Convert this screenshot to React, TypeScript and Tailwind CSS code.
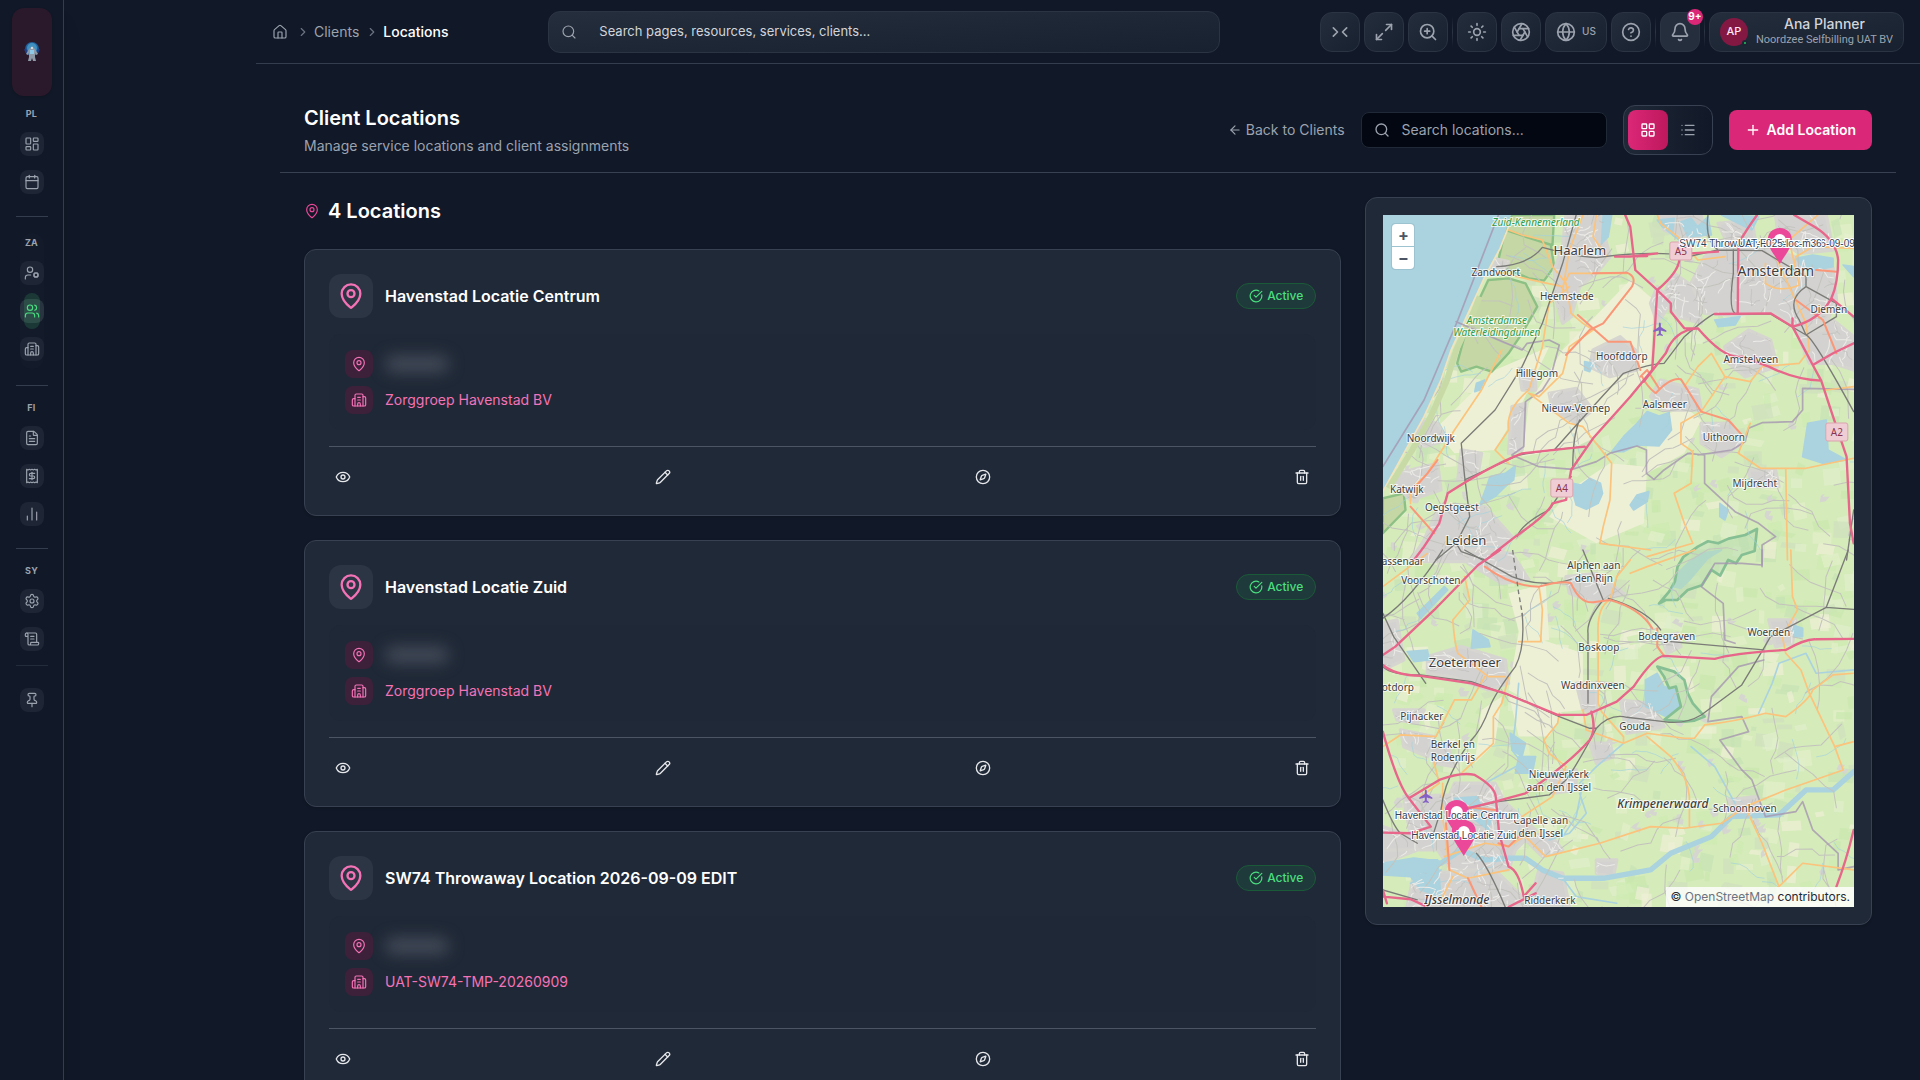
import React from "react";
import {
  Aperture, ArrowLeft, Bell, Building2, Calendar, ChartNoAxesColumn, ChevronRight, ChevronsRightLeft,
  CircleCheckBig, CircleQuestionMark, Compass, Eye, FileText, Globe, House, LayoutDashboard, LayoutGrid,
  List, MapPin, Maximize2, Pencil, Pin, Plus, Receipt, ScrollText, Search, Settings, Sun, Trash2,
  UserCog, Users, ZoomIn,
} from "lucide-react";

type Icon = React.ComponentType<{ className?: string; strokeWidth?: number }>;

/* ---------- Sidebar ---------- */

function NavItem({ icon: I, label, active }: { icon: Icon; label: string; active?: boolean }) {
  return (
    <a
      href="#"
      aria-label={label}
      className={
        active
          ? "relative flex size-6 items-center justify-center rounded-lg bg-[#28343f] text-[#4ade80]"
          : "flex size-6 items-center justify-center rounded-lg bg-[#1e2635] text-[#9ca3af]"
      }
    >
      {active && <span className="absolute -inset-y-1.5 inset-x-1 rounded-full bg-[#4ade80]/15" />}
      <I className="size-4" strokeWidth={1.75} />
    </a>
  );
}

function NavGroup({ title, items }: { title: string; items: { icon: Icon; label: string; active?: boolean }[] }) {
  return (
    <div className="flex flex-col items-center">
      <span className="mb-2.5 text-[9px] leading-4 font-bold tracking-wide text-[#9ca3af]">{title}</span>
      <div className="flex flex-col gap-3.5">
        {items.map((i) => (
          <NavItem key={i.label} {...i} />
        ))}
      </div>
    </div>
  );
}

const Rule = () => <div className="h-px w-8 bg-[#333d4d]" />;

function Logo() {
  return (
    <svg viewBox="0 0 16 20" className="h-5 w-4">
      <circle cx="8" cy="7" r="7" fill="#1f5f9a" />
      <circle cx="8" cy="6" r="5" fill="#3f8fc0" />
      <path d="M1 7l2 4M15 7l-2 4" stroke="#1d3f8a" strokeWidth="2" />
      <path d="M5 7l3-3 3 3 3 5-2 1-1-2v4l1 4H9l-1-3-1 3H4l1-4v-4l-1 2-2-1z" fill="#8f9aa8" />
      <path d="M6 8h4v4H6z" fill="#8fc9e8" />
      <path d="M7 5h2v2H7z" fill="#cdd6dd" />
    </svg>
  );
}

function Sidebar() {
  return (
    <aside className="flex w-16 shrink-0 flex-col items-center border-r border-[#333d4d] bg-[#111827] pt-2 shadow-xl">
      <a href="#" aria-label="Home page" className="flex h-22 w-10 items-center justify-center rounded-xl bg-[#2a192b] shadow">
        <Logo />
      </a>
      <nav className="flex flex-col items-center">
        <div className="pt-2.5 pb-[22px]">
          <NavGroup title="PL" items={[{ icon: LayoutDashboard, label: "Dashboard" }, { icon: Calendar, label: "Calendar" }]} />
        </div>
        <Rule />
        <div className="mt-4 mb-4 rounded-xl bg-[#131b2a] pt-0.5 pb-2">
          <NavGroup
            title="ZA"
            items={[
              { icon: UserCog, label: "Resources" },
              { icon: Users, label: "Clients", active: true },
              { icon: Building2, label: "Organisations" },
            ]}
          />
        </div>
        <Rule />
        <div className="pt-3.5 pb-[22px]">
          <NavGroup
            title="FI"
            items={[
              { icon: FileText, label: "Documents" },
              { icon: Receipt, label: "Invoices" },
              { icon: ChartNoAxesColumn, label: "Reports" },
            ]}
          />
        </div>
        <Rule />
        <div className="pt-3.5 pb-3.5">
          <NavGroup title="SY" items={[{ icon: Settings, label: "Settings" }, { icon: ScrollText, label: "Logs" }]} />
        </div>
        <div className="h-px w-8 bg-[#232c3b]" />
        <button type="button" aria-label="Pin sidebar" className="mt-[22px] flex size-6 items-center justify-center rounded-lg bg-[#1e2635] text-[#9ca3af]">
          <Pin className="size-4" strokeWidth={1.75} />
        </button>
      </nav>
    </aside>
  );
}

/* ---------- Top bar ---------- */

function BarButton({ icon: I, label }: { icon: Icon; label: string }) {
  return (
    <button
      type="button"
      aria-label={label}
      className="flex h-10 min-w-10 items-center justify-center rounded-xl border border-[#2b3443] bg-linear-to-br from-[#242d3b] to-[#18212f] text-[#9ca3af]"
    >
      <I className="size-5" strokeWidth={2} />
    </button>
  );
}

const BarRule = () => <div className="h-8 w-px bg-linear-to-b from-transparent via-[#2b3443] to-transparent" />;

function TopBar() {
  return (
    <header className="flex h-16 items-center justify-between gap-4 border-b border-[#333d4d] px-4">
      <nav aria-label="Breadcrumb" className="flex shrink-0 items-center text-sm text-[#9ca3af]">
        <a href="#" aria-label="Home"><House className="size-4" strokeWidth={1.75} /></a>
        <ChevronRight className="mr-1 ml-2 size-3.5 text-[#6b7280]" />
        <a href="#">Clients</a>
        <ChevronRight className="mr-1 ml-1.5 size-3.5 text-[#6b7280]" />
        <span className="font-medium text-white">Locations</span>
      </nav>
      <label className="flex h-[42px] w-full max-w-2xl items-center rounded-xl border border-[#2b3443] bg-linear-to-br from-[#252e3c] via-[#1e2735] to-[#172130] pl-3">
        <Search className="size-4 shrink-0 text-[#9ca3af]" strokeWidth={1.75} />
        <input
          type="search"
          aria-label="Search pages"
          placeholder="Search pages, resources, services, clients..."
          className="ml-[22px] min-w-0 flex-1 bg-transparent text-[13px] text-white outline-none placeholder:text-[#d1d5db]"
        />
      </label>
      <div className="flex shrink-0 items-center gap-1">
        <BarButton icon={ChevronsRightLeft} label="Compact view" />
        <BarButton icon={Maximize2} label="Full screen" />
        <BarButton icon={ZoomIn} label="Zoom in" />
        <BarRule />
        <BarButton icon={Sun} label="Theme" />
        <BarButton icon={Aperture} label="Accent" />
        <button
          type="button"
          aria-label="Language"
          className="flex h-10 items-center justify-center gap-1.5 rounded-xl border border-[#2b3443] bg-linear-to-br from-[#242d3b] to-[#18212f] px-2.5 text-[#9ca3af]"
        >
          <Globe className="size-5" />
          <span className="text-[10px] font-medium">US</span>
        </button>
        <BarButton icon={CircleQuestionMark} label="Help" />
        <BarRule />
        <button type="button" aria-label="Notifications" className="relative flex size-10 items-center justify-center rounded-xl border border-[#2b3443] bg-[#252e3d] text-[#9ca3af]">
          <Bell className="size-5" />
          <span className="absolute -top-1 -right-1 flex size-4 items-center justify-center rounded-full bg-[#db2777] text-[10px] font-bold text-white">9+</span>
        </button>
        <BarRule />
        <button type="button" className="flex h-10 items-center gap-2 rounded-xl border border-[#2b3443] bg-linear-to-br from-[#242d3b] to-[#18212f] px-2.5">
          <span className="relative flex size-7 shrink-0 items-center justify-center rounded-full bg-[#831843] text-[11px] font-medium text-[#fce7f3]">
            AP
            <span className="absolute right-0 bottom-0 size-1.5 rounded-full border-2 border-[#1c2533] bg-[#22c55e]" />
          </span>
          <span className="flex flex-col items-center whitespace-nowrap">
            <span className="text-sm leading-4 font-medium text-[#d1d5db]">Ana Planner</span>
            <span className="font-['Roboto',sans-serif] text-[11px] leading-4 text-[#9ca3af]">Noordzee Selfbilling UAT BV</span>
          </span>
        </button>
      </div>
    </header>
  );
}

/* ---------- Location cards ---------- */

function LocationCard({ name, client }: { name: string; client: string }) {
  const actions: [Icon, string][] = [[Eye, "View"], [Pencil, "Edit"], [Compass, "Navigate"], [Trash2, "Delete"]];
  return (
    <article className="rounded-xl border border-[#374151] bg-[#202937] p-6 shadow">
      <div className="flex items-center gap-3">
        <div className="flex size-11 items-center justify-center rounded-xl bg-[#2c3544]">
          <MapPin className="size-7 text-[#f472b6]" />
        </div>
        <h3 className="flex-1 text-base font-semibold text-white">{name}</h3>
        <span className="flex h-[26px] items-center gap-1 rounded-full border border-[#1b5a39] bg-[#1f3a3a] px-3 text-xs font-medium text-[#4ade80]">
          <CircleCheckBig className="size-3.5" />
          Active
        </span>
      </div>
      <div className="mt-4 flex flex-col gap-2 rounded-xl bg-[#1f2836] p-4">
        <div className="flex items-center gap-3">
          <span className="flex size-7 items-center justify-center rounded-lg bg-[#3d213a]">
            <MapPin className="size-4 text-[#f472b6]" strokeWidth={1.75} />
          </span>
          <span className="h-4 w-16 rounded-full bg-[#6b7280]/50 blur-[8px]" />
        </div>
        <div className="flex items-center gap-3">
          <span className="flex size-7 items-center justify-center rounded-lg bg-[#3d213a]">
            <Building2 className="size-4 text-[#f472b6]" strokeWidth={1.75} />
          </span>
          <a href="#" className="text-sm text-[#f472b6]">{client}</a>
        </div>
      </div>
      <div className="mt-4 flex justify-between border-t border-[#4b5563] pt-4">
        {actions.map(([I, label]) => (
          <button key={label} type="button" aria-label={label} className="flex size-7 items-center justify-center text-[#e5e7eb]">
            <I className="size-4" />
          </button>
        ))}
      </div>
    </article>
  );
}

/* ---------- Map ---------- */

function makeRandom(seed: number) {
  let s = seed;
  return () => {
    s = (s * 1664525 + 1013904223) % 4294967296;
    return s / 4294967296;
  };
}

/* Small fields: quads of varied greens, creams and greys scattered over land. */
function makeFields() {
  const r = makeRandom(11);
  const tones = ["#c9e8ae", "#dff0cc", "#eef0d5", "#cdebb0", "#e3efcb", "#cfe0bd", "#c6e2b5"];
  return Array.from({ length: 700 }, () => {
    const x = r() * 1393, y = r() * 2076, w = 14 + r() * 50, h = 12 + r() * 40, k = r() * 24 - 12;
    return {
      d: `M${x | 0} ${y | 0}l${w | 0} ${k | 0}l${-k | 0} ${h | 0}l${-w | 0} ${-k | 0}z`,
      fill: tones[Math.floor(r() * tones.length)],
    };
  });
}

/* Hamlets: tiny grey clusters with an irregular outline. */
function makeHamlets() {
  const r = makeRandom(301);
  let d = "";
  for (let i = 0; i < 90; i++) {
    const x = r() * 1393, y = r() * 2076;
    d += `M${x | 0} ${y | 0}`;
    for (let j = 0; j < 6; j++) {
      const a = (j / 6) * Math.PI * 2, q = 7 + r() * 13;
      d += `L${(x + Math.cos(a) * q) | 0} ${(y + Math.sin(a) * q) | 0}`;
    }
    d += "Z";
  }
  return d;
}

/* Secondary lanes and ditches: short jagged lines. */
function makeLanes(seed: number, count: number, step: number) {
  const r = makeRandom(seed);
  let d = "";
  for (let i = 0; i < count; i++) {
    let a = r() * Math.PI * 2;
    d += `M${(r() * 1393) | 0} ${(r() * 2076) | 0}`;
    for (let j = 0; j < 5; j++) {
      a += r() * 1.1 - 0.55;
      d += `l${(Math.cos(a) * step * (0.5 + r())) | 0} ${(Math.sin(a) * step * (0.5 + r())) | 0}`;
    }
  }
  return d;
}

const FIELDS = makeFields();
const HAMLETS = makeHamlets();
const LANES = makeLanes(5, 230, 40);
const DITCHES = makeLanes(29, 90, 22);
const STREETS = makeLanes(71, 1300, 12);
const BLOCKS = makeLanes(97, 700, 9);

const north = {
  cream: [
    "M600 480L800 270L870 330L860 540L700 740L640 770L480 800L500 640Z", "M400 540L560 470L480 640L400 780L280 790L220 720Z",
    "M850 700L960 650L1010 690L960 790L850 850Z", "M740 820L850 830L840 1000L700 1060L560 980L620 900Z",
  ],
  wood: [
    "M450 75H575L570 165L520 150L430 120Z", "M430 120L565 165L575 230L545 272L500 265L430 235L405 232Z",
    "M380 270L440 265L490 280L525 350L480 430L440 490L390 545L345 530L300 545L288 520L320 400Z",
    "M68 925L130 910L135 960L68 1030Z",
  ],
  urban: [
    "M610 75H720L725 140L740 200L700 250L650 290L625 380L600 400L580 330L575 240L600 170Z", "M395 205L440 215L420 250L390 245Z",
    "M885 75H1010L1020 130L980 155L900 120Z", "M1020 200L1110 150L1200 170L1300 205L1400 235L1410 330L1370 420L1300 420L1220 365L1100 375L1020 370L980 280Z",
    "M1060 100L1160 90L1170 150L1090 165Z", "M1230 75H1380L1400 180L1300 190L1240 150Z",
    "M1080 470L1150 420L1215 450L1235 530L1140 560L1090 520Z", "M1290 420L1400 390L1461 440V540L1400 520L1330 520Z",
    "M690 480L770 440L815 480L820 540L740 560L680 530Z", "M560 610L640 595L690 660L640 700L570 660Z",
    "M450 650L490 640L480 780L440 790Z", "M470 535L520 545L520 600L480 600Z", "M170 690L230 700L260 750L190 770L150 740Z",
    "M110 850L230 820L240 900L150 930L100 880Z", "M890 570L1000 600L1010 660L900 660L860 620Z",
    "M1010 700L1100 700L1130 760L1070 800L1010 760Z", "M1150 840L1230 840L1240 890L1160 890Z",
    "M230 960L370 950L450 1040L400 1115H150L190 1050Z", "M300 780L360 790L350 850L290 870Z", "M880 290L920 340L880 400L860 340Z", "M930 250L1000 300L1010 400L940 380L900 310Z",
  ],
  water: [
    "M745 785L780 740L820 700L850 665L885 678L915 668L922 720L885 768L820 765L780 785Z", "M1325 700L1380 690L1385 780L1440 810L1370 820L1310 800Z",
    "M630 880L655 885L680 865L712 880L718 910L705 940L670 958L640 945L632 915Z", "M385 860L430 850L460 828L455 870L430 890L400 920L355 945L375 890Z", "M800 945L820 915L855 905L850 935L810 960Z",
    "M880 90L930 85L925 135L945 150L895 110Z", "M950 95L980 85L1000 110L1030 80L1040 135L970 140Z", "M1070 75L1180 80L1160 120L1110 95Z",
    "M1290 205L1340 195L1400 205L1400 230L1320 245Z", "M1050 390L1125 380L1110 405L1060 410Z", "M1430 225L1461 230V260Z",
    "M345 580L370 570L355 600L340 605Z", "M720 75H745L735 140L715 160Z", "M665 515L690 520L680 545L665 540Z", "M1065 940L1090 960L1080 990L1065 980Z",
  ],
  rail: [
    "M640 75L600 220L540 400L480 530L400 660L300 760L310 860L325 980L285 1060L225 1110", "M405 230Q500 225 540 172Q640 200 700 203Q860 180 980 198L1060 180L1190 182L1320 260V290Q1260 330 1300 390L1320 435",
    "M575 780Q680 660 780 550Q860 520 900 520L960 440Q1040 370 1050 372H1215L1320 435Q1340 440 1461 665", "M310 870L470 795L580 778L665 770M650 690Q630 740 630 830", "M1110 370Q1090 360 1105 250V180",
    "M225 1110L285 1060L300 1085L370 1110M465 1040Q480 1000 560 960L625 860", "M1320 290L1410 340V380L1320 435M1030 75Q1020 150 1060 180", "M1461 960L1440 1110",
  ],
  minor: [
    "M440 120L480 135L540 150L570 230L610 280L625 370L660 400L690 420", "M385 240L500 268L600 290L620 250L790 250", "M620 290L560 340L540 470L500 600Q430 660 440 720L400 780L440 820",
    "M420 480L360 600L280 720L200 850L150 900V940", "M690 420L620 470L600 550L530 620L500 610L620 700L660 710L745 820L740 930L720 1010L710 1060L860 1080",
    "M660 75L620 180L600 300", "M700 75L690 140L730 200", "M880 75L890 100L940 140L1000 210L1080 200", "M1200 220V280Q1240 310 1300 285L1270 150L1355 75", "M1230 200L1320 400L1330 480L1300 520L1190 530L1155 575L1080 560L1040 490L1000 530L960 590",
    "M1080 560L1010 665L950 700V760L985 785L980 880L930 910L960 1000L985 1060L850 1100", "M1155 700L1120 790L1185 835L1320 835L1461 805", "M1260 835L1265 1110", "M1380 600L1461 590", "M1461 175L1340 170L1290 200L1280 260",
  ],
  trunk: [
    "M690 250L790 248Q820 260 805 290L720 400L680 420L610 495", "M645 375L735 455L800 455L830 540", "M835 560Q850 590 875 610Q920 560 950 568L1010 665L1090 690L1135 740",
    "M830 560L850 540L885 595", "M1290 330L1370 390L1410 490", "M230 810L200 850L170 885", "M150 950L220 1030", "M1350 240L1410 245",
  ],
  motor: [
    "M785 75L800 110L815 240L880 300L920 340V365L960 415H1000Q1080 510 1130 500L1210 530Q1290 570 1365 572", "M800 200L880 190M945 200Q950 240 880 300L865 540L800 620L690 745L625 840L610 930L570 940Q560 970 460 1040L390 1095",
    "M1000 415Q930 420 905 490L840 575", "M1050 372L1215 370L1280 410L1340 525L1365 572L1400 680L1440 800L1450 1000L1461 1060", "M1120 150L1118 370M1120 160Q1150 110 1175 75",
    "M1285 75L1345 110Q1410 150 1415 210Q1415 280 1395 325L1461 380M1395 325Q1360 390 1280 410V385", "M1340 525L1400 490L1461 460", "M665 770L480 790Q380 830 260 910L235 1000L190 1070L160 1110", "M755 200L850 198M980 190L1060 185",
  ],
  border: [
    "M410 75L290 390L190 630L68 830", "M285 395L480 480L495 460L560 450L590 465L565 560L540 600L490 635L485 770L450 795L530 830L630 838L700 815L740 790L820 768L848 780V850L870 868L900 840L970 790L1020 795V880L1110 965L1180 1000L1230 1040L1190 1065V1130",
    "M1461 598L1310 595V660L1280 695L1190 698L1150 715L1140 755L1100 780L1000 795",
  ],
};

const south = {
  cream: ["M480 190L540 270L660 310L660 480L560 490L440 420Z", "M440 130L550 100L560 270L480 280Z", "M440 430L600 490L560 560L470 560Z", "M360 480L420 440L400 580L340 640Z"],
  wood: [],
  nature: [
    "M885 161L915 125L932 95L940 50L957 21L1000 -10L1030 -26L1060 -20L1091 -34L1140 -45L1175 -63L1168 3L1130 15L1113 40L1090 30L1066 77L1040 60L1012 106L970 120L939 150L905 150Z",
    "M880 350L930 365L960 390L970 430L985 460L1020 500L990 512L960 515L900 510L950 470L935 410L915 415L900 380Z",
  ],
  urban: [
    "M68 220L110 210L130 330L68 360Z", "M200 320L300 290L430 330L440 400L380 420L270 380L200 370Z", "M610 80L700 70L780 130L700 160L620 130Z", "M890 260L940 250L950 290L910 310Z",
    "M640 400L700 400L700 490L660 480Z", "M770 450L860 460L900 530L790 550Z", "M1210 210L1290 210L1280 280L1230 290Z", "M120 540L220 560L200 620L130 590Z", "M205 580L260 590L280 650L220 640Z", "M100 480L190 480L170 520L110 510Z",
    "M130 740L400 730L520 840L460 900L440 960L270 960L230 900L68 900V830L150 860Z", "M68 840L160 860L170 900L68 940Z", "M160 970L400 960L480 1040L500 1071H140Z", "M480 860L560 850L600 900L540 920Z",
    "M680 580L740 580L750 620L700 640Z", "M560 670L640 660L640 720L570 730Z", "M1090 750L1170 740L1190 790L1110 800Z", "M280 700L400 700L420 740L260 750Z", "M700 930L760 930L750 980L700 970Z", "M310 0L450 10L500 90L420 100L320 40Z", "M530 960L600 970L620 1071H500Z",
  ],
  water: [
    "M845 390L880 370L900 410L935 420L950 470L905 500L845 470Z", "M925 110L945 65L975 35L1010 10L1070 0L1030 25L980 85L950 115Z", "M335 240L380 270L385 290L330 295Z", "M140 305L200 300L205 330L160 335Z", "M445 550L490 580L480 620L450 600Z", "M470 620L520 620L510 670L460 670Z",
    "M170 190L250 110L260 120L180 205Z", "M280 745L350 740L360 780L300 780Z", "M340 810L390 800L380 840Z", "M1280 225L1310 235L1310 260L1285 262Z", "M68 950L150 930L230 930L240 1040L180 1020L150 980L68 975Z",
  ],
  rail: [
    "M68 205Q150 150 245 0", "M310 0L450 80Q540 115 625 88", "M660 0L720 150Q670 210 675 250V460", "M68 350Q90 375 180 375L330 395L480 450L590 500L680 535L700 535Q740 490 790 502L900 515Q960 525 1010 495L1130 405L1195 295L1215 260L1380 172L1461 178", "M1380 172L1445 0",
    "M480 190Q490 290 460 350Q400 430 385 470Q360 540 330 570Q250 680 240 780L215 860", "M700 535Q640 650 610 690L560 735L410 755L300 780", "M68 750Q100 830 120 850L170 880M345 910Q380 950 430 1071", "M735 145Q850 180 890 240M920 275L1195 300M68 1020L170 1050", "M195 400L100 260L68 190",
  ],
  railDash: ["M452 0L470 130L482 200"],
  minor: [
    "M200 10Q120 70 68 110", "M310 80L325 150L275 210Q280 280 290 310L380 380L430 380", "M530 110L540 180L535 275H470", "M740 150Q700 170 705 260V460L715 485L780 560V580L850 550L960 565H990L1020 525Q1110 515 1200 490L1260 500Q1330 450 1340 420L1400 375L1461 370", "M740 150L760 80L800 30",
    "M1275 0L1280 140L1295 180L1250 260L1260 310L1305 360L1330 430L1405 590L1430 660L1260 720L1140 770L1070 820L960 835L860 830L710 880L550 920L490 860", "M800 70L850 50L990 0", "M440 380L420 460L395 500V580L300 670", "M370 380L330 450H280L240 530L225 560L120 555L68 590",
    "M590 490L585 520L545 570L560 610L610 650L570 740L480 800", "M660 480L670 540L780 580", "M850 560L920 620Q970 680 975 740V830", "M1140 770L1190 880L1240 1010L1310 940L1461 960", "M245 700V800L265 960L320 985L440 960", "M215 620L235 700L180 740", "M250 920L370 880L440 890L500 850", "M275 980L240 1050", "M1405 590L1461 575",
  ],
  trunk: ["M370 50Q450 110 530 110Q600 90 625 100Q650 160 690 157L740 150Q830 175 865 235", "M880 235V290L900 318", "M300 770L400 780M410 880L440 890L480 850", "M320 985L360 1071", "M265 960L255 820"],
  motor: [
    "M415 0L350 45L220 180L105 290L68 315", "M68 345Q100 375 180 378L330 400L430 430L585 495H670L760 455L810 410Q870 320 900 318L1050 327Q1100 310 1260 300Q1320 265 1350 268L1461 267", "M685 485Q700 540 680 570Q620 640 490 730L400 755Q320 775 300 780",
    "M68 545Q110 700 145 745L235 690Q300 665 340 675Q400 710 402 740L412 850L440 950Q470 960 485 1040L520 1000", "M145 745L210 830L150 850L68 848", "M68 1040L150 1048L200 1071M68 1020L80 1060", "M1461 840Q1440 930 1410 1010", "M440 1071L520 1030",
  ],
  border: ["M1190 0V45L1130 40L1050 40L1010 110L1075 160L1080 270L1110 280", "M1195 330L1120 350L1040 440L1030 515L1130 500L1150 545L1065 570L1130 660L1160 690L1200 800L1290 785L1310 755L1340 840L1415 910V960L1461 950"],
  river: [
    "M68 945L160 930L240 940L300 900L370 930L440 925L490 925L540 960L600 985L720 985L860 960L920 910L1040 860L1100 800L1240 795L1320 720L1400 720L1461 665",
  ],
  stream: [
    "M470 400L460 520L450 600L480 640L370 700", "M980 590L1050 650L1110 760", "M1180 490L1220 400L1240 340L1320 310L1350 370L1461 360", "M650 730L670 790L620 850L560 870", "M780 580L700 650L650 700",
    "M150 1000L240 960M600 985L640 1040L760 1060", "M660 700L640 800L600 860",
  ],
};

type Region = { cream: string[]; wood: string[]; urban: string[]; water: string[] };

function Ground({ r }: { r: Region }) {
  return (
    <>
      <path d={r.cream.join("")} fill="#eef0d5" />
      <path d={r.wood.join("")} fill="#c4d7a4" stroke="#8cc084" strokeWidth="7" strokeLinejoin="round" />
      <path d={r.urban.join("")} fill="#d3d2d0" stroke="#d6d5d0" strokeWidth="10" strokeLinejoin="round" />
      <path d={r.water.join("")} fill="#aad3df" stroke="#aad3df" strokeWidth="5" strokeLinejoin="round" />
    </>
  );
}

function Lines({ r }: { r: { rail: string[]; minor: string[]; trunk: string[]; motor: string[]; border: string[] } }) {
  return (
    <g fill="none" strokeLinejoin="round" strokeLinecap="round">
      <path d={r.border.join("")} stroke="#a596b0" strokeWidth="5" opacity="0.8" />
      <path d={r.minor.join("")} stroke="#fbc37b" strokeWidth="5" />
      <path d={r.rail.join("")} stroke="#7b7b78" strokeWidth="4" />
      <path d={r.trunk.join("")} stroke="#fa9778" strokeWidth="6" />
      <path d={r.motor.join("")} stroke="#e8668a" strokeWidth="7" />
    </g>
  );
}

const north0 = "translate(-68 -75)";
const south0 = "translate(-68 1005)";

type Place = [text: string, x: number, y: number, size: number, kind?: "green" | "area"];
const places: Place[] = [
  ["Zuid-Kennemerland", 153, 11, 10, "green"], ["Haarlem", 197, 40, 13], ["Zandvoort", 113, 61, 10], ["Heemstede", 184, 85, 10],
  ["Amsterdamse", 114, 109, 10, "green"], ["Waterleidingduinen", 114, 121, 10, "green"], ["Amsterdam", 393, 61, 14], ["Diemen", 446, 98, 10],
  ["Hoofddorp", 239, 145, 10], ["Amstelveen", 368, 148, 10], ["Hillegom", 154, 162, 10], ["Nieuw-Vennep", 193, 197, 10],
  ["Aalsmeer", 282, 193, 10], ["Noordwijk", 48, 227, 10], ["Uithoorn", 341, 226, 10], ["Mijdrecht", 372, 272, 10],
  ["Katwijk", 24, 278, 10], ["Oegstgeest", 69, 296, 10], ["Leiden", 83, 330, 13], ["assenaar", 20, 350, 10],
  ["Voorschoten", 48, 369, 10], ["Alphen aan", 211, 354, 10], ["den Rijn", 211, 367, 10], ["Bodegraven", 284, 425, 10],
  ["Woerden", 386, 421, 10], ["Boskoop", 216, 436, 10], ["Zoetermeer", 82, 452, 13], ["Waddinxveen", 210, 474, 10],
  ["otdorp", 15, 476, 10], ["Pijnacker", 39, 505, 10], ["Gouda", 252, 515, 10], ["Berkel en", 70, 533, 10], ["Rodenrijs", 70, 546, 10],
  ["Nieuwerkerk", 176, 563, 10], ["aan den IJssel", 176, 576, 10], ["Krimpenerwaard", 280, 593, 12, "area"], ["Schoonhoven", 362, 597, 10],
  ["Capelle aan", 158, 609, 10], ["den IJssel", 158, 622, 10], ["IJsselmonde", 74, 689, 12, "area"], ["Ridderkerk", 167, 689, 10],
];

function Shield({ x, y, children }: { x: number; y: number; children: string }) {
  return (
    <g>
      <rect x={x - 11} y={y - 9} width="22" height="18" rx="2" fill="#f0cdd4" stroke="#dba3af" />
      <text x={x} y={y + 4} textAnchor="middle" fontSize="10" fill="#8a3550">{children}</text>
    </g>
  );
}

function Plane({ x, y }: { x: number; y: number }) {
  return (
    <path
      transform={`translate(${x} ${y})`}
      d="M0-6.500C.8-6.500 1-5.500 1-4.500V-2L6.500 1.500V3L1 1.500V4.500L3 6V7L0 6.300L-3 7V6L-1 4.500V1.500L-6.500 3V1.500L-1-2V-4.500C-1-5.500-.8-6.500 0-6.500Z"
      fill="#8461c4"
    />
  );
}

function Marker({ x, y, labels }: { x: number; y: number; labels: string[] }) {
  return (
    <g>
      <path
        transform={`translate(${x} ${y})`}
        d="M0-36C-7-36-12-31-12-24.500C-12-16-5-9 0 0C5-9 12-16 12-24.500C12-31 7-36 0-36Z"
        fill="#ec4899"
      />
      <circle cx={x} cy={y - 24} r="6" fill="#fff" />
      {labels.map((l) => (
        <text
          key={l} x={x} y={y - 17} textAnchor="middle" fontSize="10" fill="#334155" stroke="#fff" strokeWidth="2"
          paintOrder="stroke" fontFamily='"Liberation Sans", Arial, sans-serif'
        >
          {l}
        </text>
      ))}
    </g>
  );
}

function MapDrawing() {
  return (
    <svg viewBox="0 0 471 692" preserveAspectRatio="xMidYMid slice" className="block size-full" role="img" aria-label="Map of client locations">
      <defs>
        <clipPath id="urban-area">
          <path transform={north0} d={north.urban.join("")} />
          <path transform={south0} d={south.urban.join("")} />
        </clipPath>
      </defs>
      <g transform="scale(0.338 0.3333)">
        <rect width="1400" height="2080" fill="#d5ebba" />
        {FIELDS.map((f, i) => <path key={i} d={f.d} fill={f.fill} opacity="0.7" />)}
        <path d={HAMLETS} fill="#d6d6d0" />
        <g transform={north0}><Ground r={north} /></g>
        <g transform={south0}>
          <Ground r={south} />
          <path d={south.nature.join("")} fill="#b8dbb0" fillOpacity="0.5" stroke="#86bf93" strokeWidth="8" strokeLinejoin="round" />
          <g fill="none" stroke="#aad3df" strokeLinejoin="round" strokeLinecap="round">
            <path d={south.river.join("")} strokeWidth="16" />
            <path d={south.stream.join("")} strokeWidth="5" />
          </g>
        </g>
        <path d={LANES} fill="none" stroke="#c3c3bd" strokeWidth="3" />
        <path d={DITCHES} fill="none" stroke="#a5d2dd" strokeWidth="2" />
        <g clipPath="url(#urban-area)" fill="none">
          <path d={STREETS} stroke="#ecebe8" strokeWidth="3" />
          <path d={BLOCKS} stroke="#bebdba" strokeWidth="2" />
        </g>
        <g transform={north0}>
          <path d="M68 75H447L415 175L370 260L320 370L270 480L240 570L190 680L130 790L68 905Z" fill="#aad3df" />
          <path d="M440 110L415 175L370 260L320 370L270 480L240 570L190 680L130 790L68 905" fill="none" stroke="#f0e3bd" strokeWidth="5" />
          <path d="M355 320L335 370L285 480L258 570L210 680L155 780L85 895" fill="none" stroke="#c8dba6" strokeWidth="18" />
          <Lines r={north} />
        </g>
        <g transform={south0}>
          <Lines r={south} />
          <path d={south.railDash.join("")} fill="none" stroke="#7b7b78" strokeWidth="4" strokeDasharray="14 10" />
        </g>
      </g>
      <g fontFamily='"Noto Sans", sans-serif'>
        <Shield x={298} y={36}>A5</Shield>
        <Shield x={454} y={217}>A2</Shield>
        <Shield x={179} y={273}>A4</Shield>
        {places.map(([t, x, y, size, kind]) => (
          <text
            key={t + y} x={x} y={y} textAnchor="middle" fontSize={size} paintOrder="stroke" stroke="#fff" strokeOpacity="0.75" strokeWidth="2"
            fontStyle={kind ? "italic" : "normal"} fontWeight={kind === "area" ? 500 : 400} fill={kind === "green" ? "#2e9b45" : "#3f3f3f"}
          >
            {t}
          </text>
        ))}
      </g>
      <Plane x={277} y={114} />
      <Plane x={43} y={581} />
      <Marker x={397} y={49} labels={["SW74 Throwaway Location 2026-09-09 EDIT", "UAT-F025-loc-m36"]} />
      <Marker x={74} y={621} labels={["Havenstad Locatie Centrum"]} />
      <Marker x={81} y={641} labels={["Havenstad Locatie Zuid"]} />
    </svg>
  );
}

function MapCard() {
  return (
    <section aria-label="Map" className="self-start rounded-xl border border-[#374151] bg-[#202937] p-[17px] shadow">
      <div className="relative h-[692px] overflow-hidden">
        <MapDrawing />
        <div className="absolute top-2 left-2 flex flex-col gap-px rounded-sm border border-[#9cc3cf] bg-[#9cc3cf]">
          <button type="button" aria-label="Zoom in" className="size-[22px] rounded-t-sm bg-white text-base leading-5 font-bold text-[#4b5563]">+</button>
          <button type="button" aria-label="Zoom out" className="size-[22px] rounded-b-sm bg-white text-base leading-5 font-bold text-[#4b5563]">−</button>
        </div>
        <p className="absolute right-0 bottom-0 bg-white/80 px-1 text-xs leading-5 text-[#1f2937]">
          © <a href="#" className="text-[#6b7280]">OpenStreetMap</a> contributors.
        </p>
      </div>
    </section>
  );
}

/* ---------- Page ---------- */

const locations = [
  { name: "Havenstad Locatie Centrum", client: "Zorggroep Havenstad BV" },
  { name: "Havenstad Locatie Zuid", client: "Zorggroep Havenstad BV" },
  { name: "SW74 Throwaway Location 2026-09-09 EDIT", client: "UAT-SW74-TMP-20260909" },
];

export default function App() {
  return (
    <div className="flex h-screen overflow-hidden bg-[#111827] font-['Inter',sans-serif] text-white">
      <Sidebar />
      <div className="ml-48 min-w-0 flex-1">
        <TopBar />
        <main className="px-6 pt-6">
          <div className="flex items-center justify-between border-b border-[#374151] px-6 pt-4 pb-4">
            <div>
              <h1 className="text-xl font-semibold">Client Locations</h1>
              <p className="mt-1 text-sm text-[#9ca3af]">Manage service locations and client assignments</p>
            </div>
            <div className="flex items-center gap-4">
              <a href="#" className="flex items-center gap-1 text-sm text-[#9ca3af]">
                <ArrowLeft className="size-3.5" />
                Back to Clients
              </a>
              <label className="flex h-9 w-[246px] items-center rounded-lg border border-[#1f2937] bg-[#030712] pl-3">
                <Search className="size-4 shrink-0 text-[#9ca3af]" />
                <input
                  type="search"
                  aria-label="Search locations"
                  placeholder="Search locations..."
                  className="ml-3 min-w-0 flex-1 bg-transparent text-sm outline-none placeholder:text-[#9ca3af]"
                />
              </label>
              <div className="flex rounded-xl border border-[#374151] bg-linear-to-r from-[#1f2937] to-[#111827] p-1">
                <button type="button" aria-label="Grid view" className="flex size-10 items-center justify-center rounded-lg bg-linear-to-r from-[#db2777] to-[#be185d]">
                  <LayoutGrid className="size-4" />
                </button>
                <button type="button" aria-label="List view" className="flex size-10 items-center justify-center text-[#9ca3af]">
                  <List className="size-4" />
                </button>
              </div>
              <button type="button" className="flex h-10 items-center gap-1.5 rounded-lg bg-[#db2777] px-4 text-sm font-semibold">
                <Plus className="size-4" />
                Add Location
              </button>
            </div>
          </div>
          <div className="grid grid-cols-3 gap-6 px-6 pt-6">
            <div className="col-span-2">
              <h2 className="flex items-center gap-2 text-xl font-semibold">
                <MapPin className="size-4 text-[#ec4899]" strokeWidth={1.75} />
                4 Locations
              </h2>
              <div className="mt-6 flex flex-col gap-6">
                {locations.map((l) => (
                  <LocationCard key={l.name} {...l} />
                ))}
              </div>
            </div>
            <MapCard />
          </div>
        </main>
      </div>
    </div>
  );
}
